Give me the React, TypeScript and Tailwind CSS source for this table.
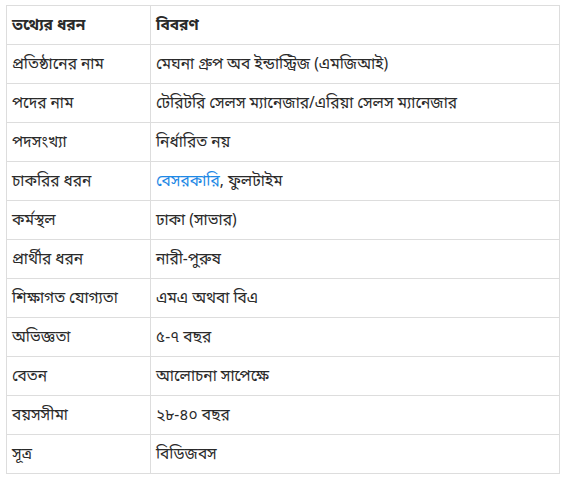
import React from 'react';

const rows: [string, React.ReactNode][] = [
  ['প্রতিষ্ঠানের নাম', 'মেঘনা গ্রুপ অব ইন্ডাস্ট্রিজ (এমজিআই)'],
  ['পদের নাম', 'টেরিটরি সেলস ম্যানেজার/এরিয়া সেলস ম্যানেজার'],
  ['পদসংখ্যা', 'নির্ধারিত নয়'],
  [
    'চাকরির ধরন',
    <>
      <a href="#" className="text-[#1e88e5]">বেসরকারি</a>, ফুলটাইম
    </>,
  ],
  ['কর্মস্থল', 'ঢাকা (সাভার)'],
  ['প্রার্থীর ধরন', 'নারী-পুরুষ'],
  ['শিক্ষাগত যোগ্যতা', 'এমএ অথবা বিএ'],
  ['অভিজ্ঞতা', '৫-৭ বছর'],
  ['বেতন', 'আলোচনা সাপেক্ষে'],
  ['বয়সসীমা', '২৮-৪০ বছর'],
  ['সূত্র', 'বিডিজবস'],
];

export default function App() {
  return (
    <div className="w-[567px] h-[478px] bg-white pt-[5px] pl-[6px] font-['Noto_Sans','Noto_Sans_Bengali',sans-serif] text-[15.5px] text-[#2a2a2a]">
      <table className="w-[554px] border-collapse border border-[#ddd]">
        <thead>
          <tr className="h-[39px]">
            <th className="w-[144px] border border-[#ddd] px-[5px] text-left font-bold">তথ্যের ধরন</th>
            <th className="border border-[#ddd] px-[5px] text-left font-bold">বিবরণ</th>
          </tr>
        </thead>
        <tbody>
          {rows.map(([k, v]) => (
            <tr key={k} className="h-[39px]">
              <td className="border border-[#ddd] px-[5px]">{k}</td>
              <td className="border border-[#ddd] px-[5px]">{v}</td>
            </tr>
          ))}
        </tbody>
      </table>
    </div>
  );
}
